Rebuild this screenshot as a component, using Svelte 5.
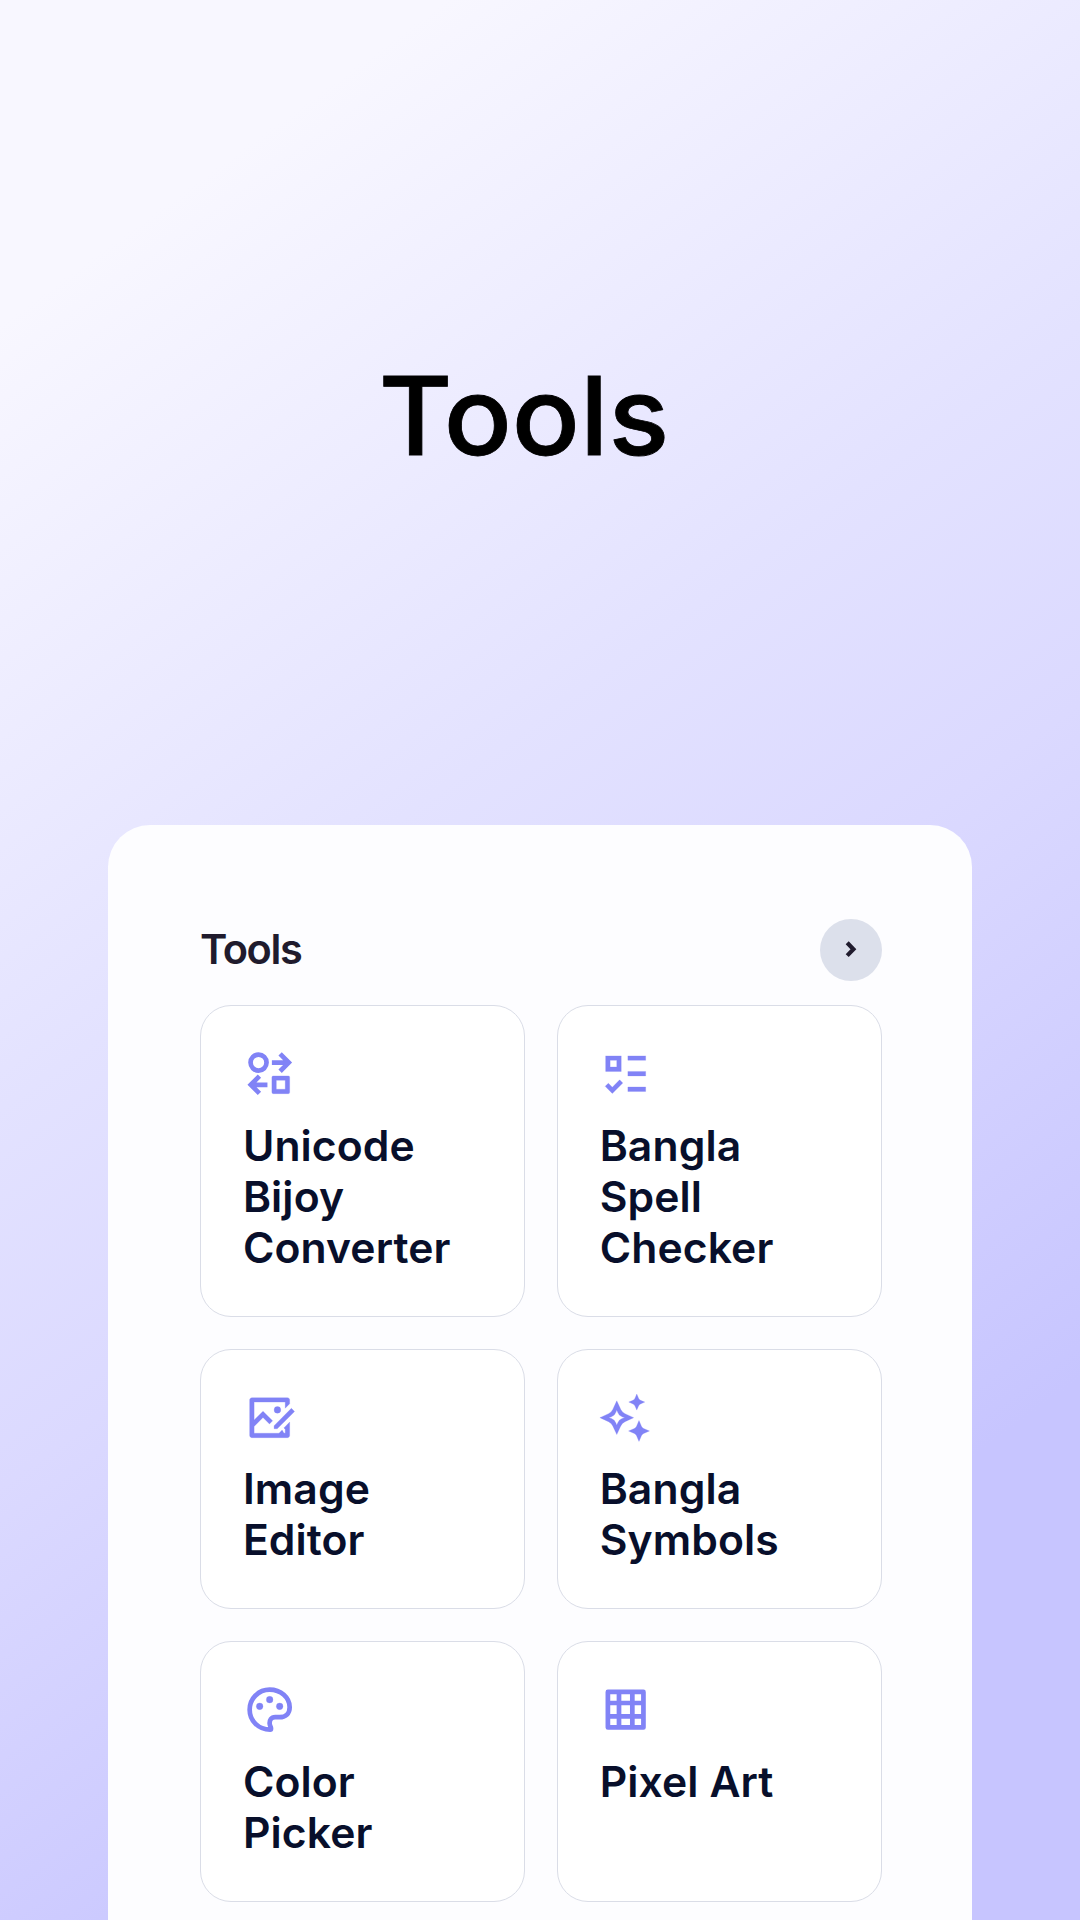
<script>
  const tools = [
    { icon: 'convert', lines: ['Unicode', 'Bijoy', 'Converter'] },
    { icon: 'check', lines: ['Bangla', 'Spell', 'Checker'] },
    { icon: 'image', lines: ['Image', 'Editor'] },
    { icon: 'sparkle', lines: ['Bangla', 'Symbols'] },
    { icon: 'palette', lines: ['Color', 'Picker'] },
    { icon: 'grid', lines: ['Pixel Art'] }
  ];
</script>

<main class="page">
  <header class="hero"><h1>Tools</h1></header>
  <section class="panel">
    <div class="head">
      <h2>Tools</h2>
      <button class="more" aria-label="More tools">
        <svg viewBox="0 0 62 62"><path d="M27.2 23.8 L33.4 30.2 L27.2 36.6" /></svg>
      </button>
    </div>
    <div class="cards">
      {#each tools as tool}
        <article class="card">
          <svg class="icon" viewBox="0 0 24 24">
            {#if tool.icon === 'convert'}
              <g class="line">
                <circle cx="7" cy="7" r="3.6" />
                <path d="M13 7H20.5M16.7 3.1L20.6 7L16.7 10.9M11 17H3.5M7.4 13.1L3.5 17L7.4 20.9" />
              </g>
              <path fill-rule="evenodd" d="M13.6 13H20.4A.6.6 0 0 1 21 13.6V20.4A.6.6 0 0 1 20.4 21H13.6A.6.6 0 0 1 13 20.4V13.6A.6.6 0 0 1 13.6 13ZM15 15V19H19V15Z" />
            {:else if tool.icon === 'check'}
              <path d="M8 6V9H5V6H8ZM3 4V11H10V4H3ZM13 4H21V6H13V4ZM13 11H21V13H13V11ZM13 18H21V20H13V18ZM10.707 16.207L9.293 14.793L6 18.086L4.207 16.293L2.793 17.707L6 20.914L10.707 16.207Z" />
            {:else if tool.icon === 'image'}
              <path d="M20 3C20.552 3 21 3.448 21 4V5.757L19 7.757V5H5V13.1L9 9.1L13.328 13.429L11.913 14.842L9 11.929L5 15.929V19H16.2L17.6 17.6L18.4 18.9L19 19V17.2L18.4 16.6L21 14V20.007C21 20.555 20.555 21 20.007 21H3.993C3.445 21 3 20.555 3 20.007V3.993C3 3.445 3.445 3 3.993 3H20ZM21.778 7.808L23.192 9.222L15.414 17L13.998 16.998L14 15.586L21.778 7.808ZM15.5 7A1.5 1.5 0 1 1 15.5 10A1.5 1.5 0 1 1 15.5 7Z" />
            {:else if tool.icon === 'sparkle'}
              <path fill-rule="evenodd" d="M8 4.4L9.8 8.3Q10.4 9.6 11.7 10.2L15.6 12L11.7 13.8Q10.4 14.4 9.8 15.7L8 19.6L6.2 15.7Q5.6 14.4 4.3 13.8L.4 12L4.3 10.2Q5.6 9.6 6.2 8.3ZM8 8.6L7.6 9.6Q7.1 11.1 5.6 11.6L4.4 12L5.6 12.4Q7.1 12.9 7.6 14.4L8 15.4L8.4 14.4Q8.9 12.9 10.4 12.4L11.6 12L10.4 11.6Q8.9 11.1 8.4 9.6Z" />
              <path d="M17 1.4L17.8 3.3Q18.1 3.9 18.7 4.2L20.6 5L18.7 5.8Q18.1 6.1 17.8 6.7L17 8.6L16.2 6.7Q15.9 6.1 15.3 5.8L13.4 5L15.3 4.2Q15.9 3.9 16.2 3.3ZM18 13.3L19.1 15.9Q19.4 16.6 20.1 16.9L22.7 18L20.1 19.1Q19.4 19.4 19.1 20.1L18 22.7L16.9 20.1Q16.6 19.4 15.9 19.1L13.3 18L15.9 16.9Q16.6 16.6 16.9 15.9Z" />
            {:else if tool.icon === 'palette'}
              <path class="line" d="M12.2 21C7 21 3 17 3 12C3 7 7 3 12 3C17 3 21 6.6 21 10.9C21 13.9 19 15.4 16.5 15.4H14.5C12.6 15.4 11.9 16.8 12 18.3C12.1 19.5 12.7 19.7 12.6 20.6C12.6 20.9 12.4 21 12.2 21Z" />
              <circle cx="7.5" cy="10.5" r="1.5" /><circle cx="12" cy="7.5" r="1.5" /><circle cx="16.5" cy="10.5" r="1.5" />
            {:else}
              <path class="line" d="M4 4H20V20H4ZM9 4V20M15 4V20M4 9H20M4 15H20" stroke-linejoin="round" />
            {/if}
          </svg>
          <h3>{#each tool.lines as line}<span>{line}</span>{/each}</h3>
        </article>
      {/each}
    </div>
  </section>
</main>

<style>
  :global(body) { overflow: hidden; }
  h1, h2, h3 { margin: 0; }
  .page {
    box-sizing: border-box;
    width: 1080px;
    height: 1920px;
    overflow: hidden;
    display: flex;
    flex-direction: column;
    align-items: center;
    font-family: Inter, "Liberation Sans", sans-serif;
    background: linear-gradient(144deg, #f8f7ff 12%, #e3e2ff 41%, #dbd9ff 55%, #c7c5ff 80%);
  }
  .hero {
    flex: none;
    box-sizing: border-box;
    width: 864px;
    height: 825px;
    padding: 349px 32px 0 0;
    text-align: center;
  }
  h1 {
    font-size: 109px;
    line-height: 132px;
    font-weight: 500;
    color: #000;
    -webkit-text-stroke: .8px #000;
    transform: scaleX(1.035);
  }
  .panel {
    flex: none;
    box-sizing: border-box;
    width: 864px;
    height: 1200px;
    padding: 93.5px 90px 0 92px;
    border-radius: 42px 42px 0 0;
    background: #fdfdff;
  }
  .head {
    display: flex;
    align-items: center;
    justify-content: space-between;
    height: 62px;
    margin-bottom: 24.5px;
  }
  h2 {
    font-size: 41.5px;
    line-height: 50px;
    padding-bottom: 1px;
    font-weight: 600;
    letter-spacing: -1.4px;
    color: #201b2d;
  }
  .more {
    width: 62px;
    height: 62px;
    padding: 0;
    border: 0;
    border-radius: 50%;
    background: #dce0eb;
  }
  .more svg { display: block; width: 62px; height: 62px; fill: none; stroke: #201b2d; stroke-width: 4.2; }
  .cards { display: grid; grid-template-columns: 1fr 1fr; gap: 31.5px; }
  .card {
    box-sizing: border-box;
    padding: 41px 41.5px 42.7px;
    border: 1px solid #dadde7;
    border-radius: 31px;
    background: #fff;
  }
  .icon {
    display: block;
    width: 53.33px;
    height: 53.33px;
    margin-bottom: 19.4px;
    fill: #8183f6;
    stroke: #8183f6;
    stroke-width: .12;
  }
  .line { fill: none; stroke-width: 2.12; }
  h3 {
    padding-left: .4px;
    font-size: 42.67px;
    line-height: 51.2px;
    font-weight: 600;
    letter-spacing: .1px;
    color: #080f2b;
  }
  h3 span { display: block; white-space: nowrap; }
</style>
